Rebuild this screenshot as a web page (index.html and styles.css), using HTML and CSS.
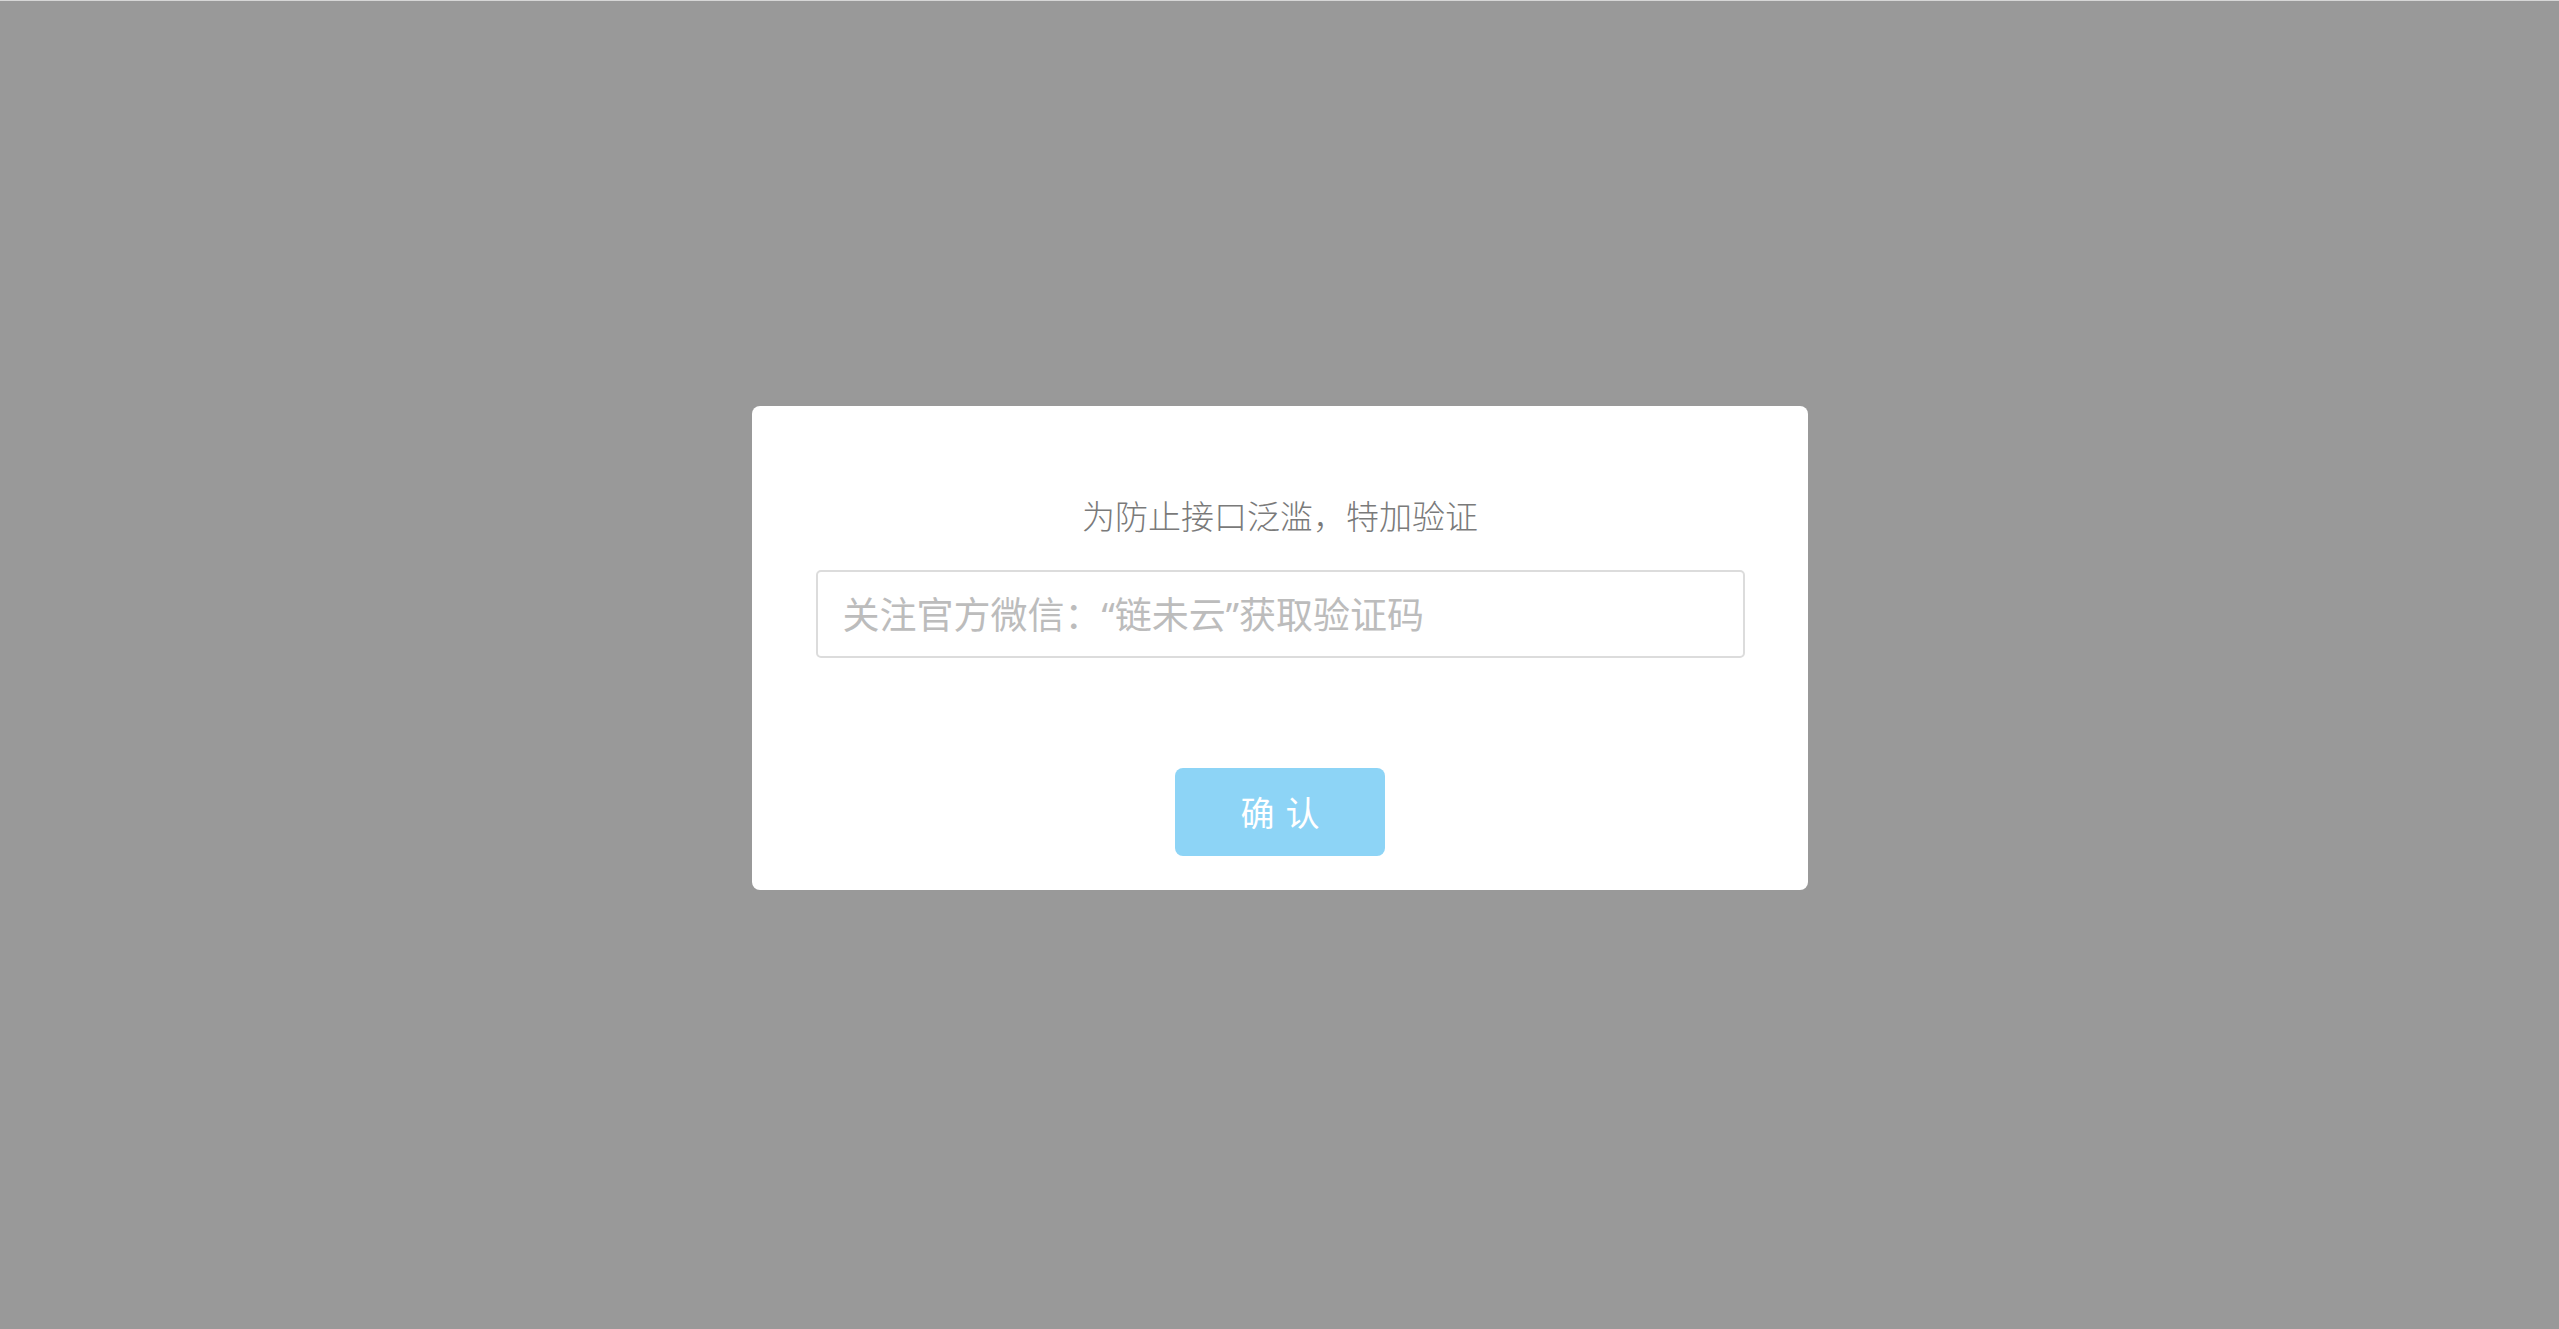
FILE: index.html
```html
<!DOCTYPE html>
<html lang="zh-CN">
<head>
<meta charset="utf-8">
<title>验证</title>
<link rel="stylesheet" href="styles.css">
</head>
<body>
<div class="overlay">
  <div class="dialog">
    <div class="title">为防止接口泛滥，特加验证</div>
    <input class="code-input" type="text" placeholder="关注官方微信：“链未云”获取验证码">
    <button class="confirm" type="button">确<span class="gap"></span>认</button>
  </div>
</div>
</body>
</html>
```

FILE: styles.css
```css
html, body {
  margin: 0;
  padding: 0;
  height: 100%;
}
body {
  background: #999999;
  font-family: "Noto Sans CJK SC", "Noto Sans", sans-serif;
}
.overlay {
  min-height: 100%;
  box-sizing: border-box;
  border-top: 1px solid #d6d6d6;
  display: flex;
  justify-content: center;
  align-items: flex-start;
  padding-top: 405px;
}
.dialog {
  width: 1056px;
  box-sizing: border-box;
  background: #ffffff;
  border-radius: 8px;
  padding: 89px 63px 34px 64px;
  display: flex;
  flex-direction: column;
  align-items: center;
}
.title {
  font-size: 33px;
  line-height: 40px;
  color: #7a7a7a;
  font-weight: 300;
  text-align: center;
}
.code-input {
  margin-top: 35px;
  width: 100%;
  height: 88px;
  box-sizing: border-box;
  border: 2px solid #dcdcdc;
  border-radius: 5px;
  padding: 0 24px 0 25px;
  font-family: "Noto Sans", "Noto Sans CJK SC", sans-serif;
  font-size: 37px;
  color: #333;
  outline: none;
  background: #fff;
}
.code-input::placeholder {
  color: #bcbcbc;
}
.confirm {
  margin-top: 110px;
  width: 210px;
  height: 88px;
  border: none;
  border-radius: 8px;
  background: #8dd4f6;
  color: #ffffff;
  font-family: "Noto Sans CJK SC", "Noto Sans", sans-serif;
  font-size: 34px;
  line-height: 88px;
  padding: 0;
  display: flex;
  justify-content: center;
  align-items: center;
}
.gap {
  display: inline-block;
  width: 11px;
}
```
